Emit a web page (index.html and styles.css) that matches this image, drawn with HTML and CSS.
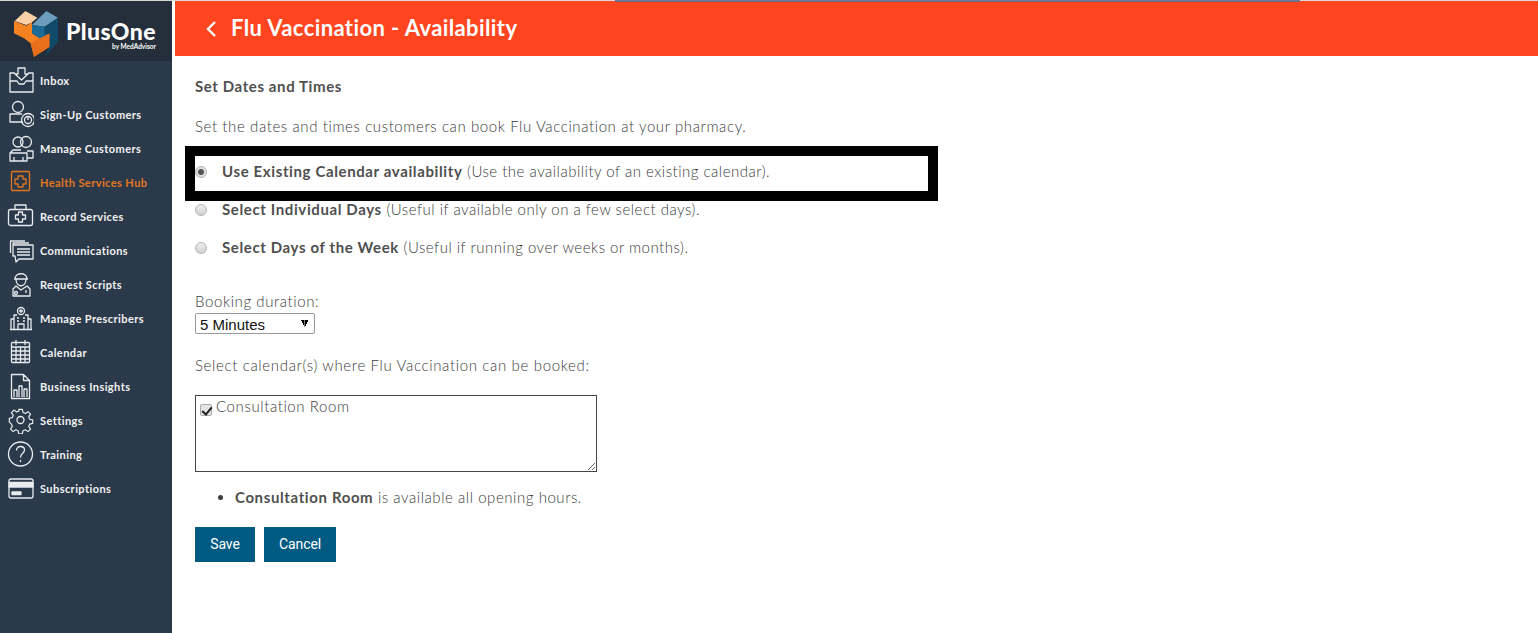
FILE: index.html
```html
<!DOCTYPE html>
<html lang="en">
<head>
    <meta charset="UTF-8">
    <title>Flu Vaccination - Availability</title>
    <link rel="stylesheet" href="styles.css">
</head>
<body>
    <div class="top-strip"></div>
    <div class="layout">
        <!-- Sidebar -->
        <aside class="sidebar">
            <div class="brand">
                <svg class="brand-mark" viewBox="0 0 180 156">
                    <polygon points="18,48 55,62 72,52 72,85 95,100 125,85 125,125 78,155 68,115 48,100 18,85" fill="#f58220"/>
                    <polygon points="20,48 52,18 88,38 72,52 55,60" fill="#fbd0a4"/>
                    <polygon points="68,115 95,100 125,85 125,125 78,155" fill="#e8701a"/>
                    <polygon points="72,60 115,18 150,38 110,65" fill="#6c9dbd"/>
                    <polygon points="72,60 110,65 110,88 125,85 95,100 72,85" fill="#1c6b96"/>
                    <polygon points="110,65 150,38 150,110 110,155 125,125 125,85 110,88" fill="#0f4a6b"/>
                </svg>
                <div class="brand-name">
                    <span class="brand-title">PlusOne</span>
                    <span class="brand-by">by MedAdvisor</span>
                </div>
            </div>
            <nav class="nav">
                <a class="nav-item">
                    <svg viewBox="0 0 28 28"><path d="M9 7H4v19h23V7h-5M4 15h7l2 3h5l2-3h7M12 2h7v6h3l-6.500 6L9 8h3z"/></svg>
                    <span>Inbox</span>
                </a>
                <a class="nav-item">
                    <svg viewBox="0 0 28 28"><circle cx="12" cy="7" r="5.500"/><path d="M16 14H4v8h13M4 22v-4"/><circle cx="22" cy="20" r="6.500"/><circle cx="22" cy="20" r="3.500"/><path d="M22 16v4"/></svg>
                    <span>Sign-Up Customers</span>
                </a>
                <a class="nav-item">
                    <svg viewBox="0 0 28 28"><circle cx="12" cy="8" r="5"/><circle cx="20" cy="8" r="5.500"/><path d="M4 27V19h17v8zM8 27v-4M17 27v-4M21 17h6v7h-6M4 19l3-3h8"/></svg>
                    <span>Manage Customers</span>
                </a>
                <a class="nav-item active">
                    <svg viewBox="0 0 28 28"><rect x="5.500" y="3.500" width="18" height="19" rx="1"/><path d="M12 8h5v3h3v5h-3v3h-5v-3H9v-5h3z"/></svg>
                    <span>Health Services Hub</span>
                </a>
                <a class="nav-item">
                    <svg viewBox="0 0 28 28"><rect x="2.500" y="7.500" width="24" height="16" rx="2"/><path d="M9 7V3h11v4M12.500 10h4v3h3v4h-3v3h-4v-3h-3v-4h3z"/></svg>
                    <span>Record Services</span>
                </a>
                <a class="nav-item">
                    <svg viewBox="0 0 28 28"><path d="M7 9V7H23M4.500 17V5H19M9 20H7V9h20v14H13l-3 3z"/><path d="M11 13h13M11 16h13M11 19h13"/></svg>
                    <span>Communications</span>
                </a>
                <a class="nav-item">
                    <svg viewBox="0 0 28 28"><path d="M9 9c0-7 12-7 12 0M8 9h14M10 9c0 9 10 9 10 0M10 16l-3 3v7h17v-7l-3-3-6 4z"/><circle cx="10" cy="23" r="1.500"/><path d="M20 20v3"/></svg>
                    <span>Request Scripts</span>
                </a>
                <a class="nav-item">
                    <svg viewBox="0 0 28 28"><circle cx="15" cy="7" r="3.500"/><path d="M15 5v4M13 7h4M11 11H8v14M19 11h3v14M8 15H5v10M22 15h3v10M4 25.500h22M12 25v-5h6v5M11 14h2M17 14h2M11 17h2M17 17h2"/></svg>
                    <span>Manage Prescribers</span>
                </a>
                <a class="nav-item">
                    <svg viewBox="0 0 28 28"><rect x="5.500" y="4.500" width="18" height="20" rx="1"/><path d="M5 9h19M10 2v5M19 2v5M5.500 13h18M5.500 17h18M5.500 21h18M10 9v15M14.500 9v15M19 9v15"/></svg>
                    <span>Calendar</span>
                </a>
                <a class="nav-item">
                    <svg viewBox="0 0 28 28"><path d="M5.500 2.500h12l6 6v18h-18zM17.500 2.500v6h6M8 25v-7h3v7M13 25v-11h3v11M18 25v-8h3v8"/></svg>
                    <span>Business Insights</span>
                </a>
                <a class="nav-item">
                    <svg viewBox="0 0 28 28"><circle cx="14.500" cy="14" r="3.500"/><path d="M12.500 2h4l.7 3.500 2.600 1.100 3-2 2.800 2.800-2 3 1.100 2.600 3.300.7v4l-3.300.7-1.100 2.600 2 3-2.800 2.800-3-2-2.600 1.100-.7 3.300h-4l-.7-3.300-2.600-1.100-3 2-2.800-2.800 2-3-1.100-2.600L2 16v-4l3.300-.7 1.100-2.600-2-3 2.800-2.800 3 2 2.600-1.100z" transform="translate(1.500 1.500) scale(.9)"/></svg>
                    <span>Settings</span>
                </a>
                <a class="nav-item">
                    <svg viewBox="0 0 28 28"><circle cx="14.500" cy="14" r="12"/><path d="M10.500 10.500c0-5.500 8-5 8-.5 0 3.500-4 3-4 7.500M14.500 20v2"/></svg>
                    <span>Training</span>
                </a>
                <a class="nav-item">
                    <svg viewBox="0 0 28 28"><rect x="3" y="5" width="24" height="19" rx="2"/><rect x="3" y="8.500" width="24" height="4.500" class="fill"/><rect x="6" y="18" width="9" height="2.500" class="fill"/></svg>
                    <span>Subscriptions</span>
                </a>
            </nav>
        </aside>

        <!-- Main -->
        <main class="main">
            <header class="page-header">
                <svg class="back" viewBox="0 0 12 18"><path d="M10 2L3 9l7 7"/></svg>
                <h1>Flu Vaccination - Availability</h1>
            </header>
            <div class="content">
                <h2>Set Dates and Times</h2>
                <p class="intro">Set the dates and times customers can book Flu Vaccination at your pharmacy.</p>

                <div class="options">
                    <div class="highlight"></div>
                    <label class="option"><input type="radio" name="mode" checked><span><b>Use Existing Calendar availability</b> (Use the availability of an existing calendar).</span></label>
                    <label class="option"><input type="radio" name="mode"><span><b>Select Individual Days</b> (Useful if available only on a few select days).</span></label>
                    <label class="option"><input type="radio" name="mode"><span><b>Select Days of the Week</b> (Useful if running over weeks or months).</span></label>
                </div>

                <label class="field-label" for="duration">Booking duration:</label>
                <select id="duration" class="duration">
                    <option>5 Minutes</option>
                    <option>10 Minutes</option>
                    <option>15 Minutes</option>
                </select>

                <p class="calendars-label">Select calendar(s) where Flu Vaccination can be booked:</p>
                <div class="calendar-box">
                    <label><input type="checkbox" checked><span>Consultation Room</span></label>
                </div>

                <ul class="hours">
                    <li><b>Consultation Room</b> is available all opening hours.</li>
                </ul>

                <div class="actions">
                    <button>Save</button>
                    <button>Cancel</button>
                </div>
            </div>
        </main>
    </div>
</body>
</html>
```

FILE: styles.css
```css
* {
    margin: 0;
    padding: 0;
    box-sizing: border-box;
}
html, body {
    height: 100%;
    overflow: hidden;
}
body {
    font-family: 'Lato', sans-serif;
    background-color: #fff;
    color: #3c3c3c;
    position: relative;
}
b {
    color: #4f4f4f;
    font-weight: 700;
    letter-spacing: 0.62px;
}
.top-strip {
    position: absolute;
    top: 0;
    left: 615px;
    width: 685px;
    height: 2px;
    background-color: #6a7ba6;
    border: 1px solid #6b6f80;
    border-top: none;
}
.layout {
    display: flex;
    height: 100%;
    border-top: 1px solid #d8d8d8;
}
.sidebar {
    width: 172px;
    flex-shrink: 0;
    background-color: #2b3a4a;
}
.brand {
    height: 60px;
    background-color: #242f3b;
    display: flex;
    align-items: center;
    padding-left: 8px;
}
.brand-mark {
    width: 60px;
    height: 52px;
    flex-shrink: 0;
}
.brand-name {
    display: flex;
    flex-direction: column;
    align-items: flex-end;
    color: #fff;
    margin-top: 8px;
    margin-left: -2px;
}
.brand-title {
    font-size: 23px;
    font-weight: 900;
    line-height: 24px;
    letter-spacing: 0.4px;
}
.brand-by {
    font-size: 6.500px;
    line-height: 8px;
    font-weight: 700;
}
.nav {
    padding-top: 2px;
}
.nav-item {
    display: flex;
    align-items: center;
    height: 34px;
    padding-left: 6px;
    gap: 6px;
    color: #f2f2f2;
    font-size: 11px;
    font-weight: 700;
    letter-spacing: 0.42px;
}
.nav-item svg {
    width: 28px;
    height: 28px;
    fill: none;
    stroke: #e8ecef;
    stroke-width: 1.3;
    stroke-linejoin: round;
    flex-shrink: 0;
}
.nav-item svg .fill {
    fill: #e8ecef;
}
.nav-item.active {
    color: #e2761f;
}
.nav-item.active svg {
    stroke: #e2761f;
}
.main {
    flex: 1;
    margin-left: 3px;
}
.page-header {
    height: 55px;
    background-color: #ff451f;
    display: flex;
    align-items: center;
    padding-left: 30px;
    gap: 14px;
    color: #fff;
}
.back {
    width: 12px;
    height: 18px;
    fill: none;
    stroke: #fff;
    stroke-width: 2.4;
}
.page-header h1 {
    font-size: 22px;
    font-weight: 700;
    letter-spacing: 0.4px;
    line-height: 24px;
    margin-top: -2px;
}
.content {
    padding: 20px 20px 0;
    font-size: 15px;
    font-weight: 300;
    letter-spacing: 0.6px;
}
.content h2 {
    font-size: 15px;
    font-weight: 700;
    line-height: 20px;
    color: #4f4f4f;
}
.intro {
    margin-top: 20px;
    line-height: 20px;
}
.options {
    position: relative;
    margin-top: 16px;
    margin-bottom: 25px;
    letter-spacing: 0.5px;
}
.highlight {
    position: absolute;
    top: -6px;
    left: -10px;
    width: 753px;
    height: 55px;
    border: 10px solid #000;
}
.option {
    display: flex;
    align-items: center;
    height: 38px;
    gap: 15px;
}
.option input {
    appearance: none;
    width: 12px;
    height: 12px;
    margin-top: 1px;
    border-radius: 50%;
    border: 1px solid #b5b5b5;
    background: linear-gradient(#efefef, #cfcfcf);
}
.option input:checked {
    background: radial-gradient(circle, #555 0 2.500px, #ddd 3.500px);
}
.field-label {
    display: block;
    line-height: 20px;
}
.duration {
    appearance: none;
    display: block;
    width: 120px;
    height: 21px;
    margin-top: 2px;
    padding: 1px 0 0 4px;
    font-family: 'Liberation Sans', sans-serif;
    font-size: 15px;
    color: #111;
    border: 1px solid #999;
    border-radius: 2px;
    background-color: #fff;
    background-image: linear-gradient(to top right, transparent 50%, #000 50%), linear-gradient(to top left, transparent 50%, #000 50%);
    background-size: 3.500px 7px;
    background-position: 105px 6px, 108.500px 6px;
    background-repeat: no-repeat;
}
.calendars-label {
    margin-top: 21px;
    line-height: 20px;
    letter-spacing: 0.65px;
}
.calendar-box {
    width: 402px;
    height: 77px;
    margin-top: 20px;
    border: 1px solid #444;
    padding: 0 4px;
    resize: both;
    overflow: hidden;
}
.calendar-box label {
    display: flex;
    gap: 4px;
    line-height: 20px;
}
.calendar-box input {
    appearance: none;
    position: relative;
    width: 12px;
    height: 12px;
    margin-top: 8px;
    border: 1px solid #aaa;
    border-radius: 2px;
    background-color: #e4e4e4;
}
.calendar-box input:checked::after {
    content: "";
    position: absolute;
    left: 3px;
    top: 0;
    width: 4px;
    height: 8px;
    border: solid #222;
    border-width: 0 2px 2px 0;
    transform: rotate(40deg);
}
.hours {
    margin-top: 15px;
    padding-left: 40px;
    line-height: 20px;
    letter-spacing: 0.55px;
}
.actions {
    display: flex;
    gap: 9px;
    margin-top: 20px;
}
.actions button {
    min-width: 60px;
    height: 35px;
    padding: 0 15px 1px;
    background-color: #005a82;
    color: #fff;
    border: none;
    font-family: 'Roboto', sans-serif;
    font-size: 14px;
    font-weight: 400;
    letter-spacing: -0.1px;
}
```
